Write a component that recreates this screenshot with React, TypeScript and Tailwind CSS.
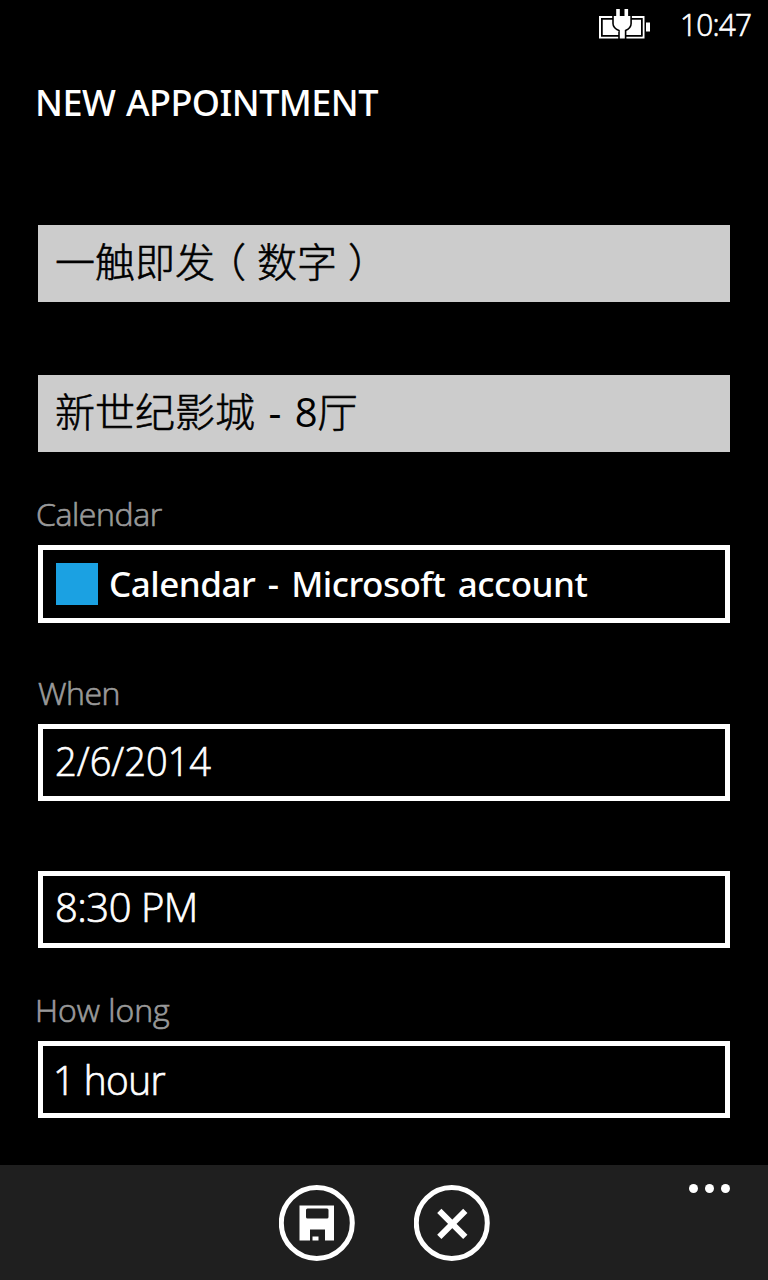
import type { ReactNode } from 'react';

const light = "font-['Open_Sans','Noto_Sans_CJK_SC',sans-serif] font-light [-webkit-text-stroke:0.7px_currentColor]";
const chinese = "font-['Open_Sans','Noto_Sans_CJK_SC',sans-serif] font-light [-webkit-text-stroke:0.6px_currentColor]";
const medium = "font-['Noto_Sans',sans-serif] font-medium";

function BatteryIcon() {
  return (
    <svg width="52" height="31" viewBox="0 0 52 31" fill="none">
      <rect x="1" y="8" width="43.5" height="20.500" stroke="#fff" strokeWidth="2" />
      <rect x="3.500" y="10.500" width="38.500" height="15.500" fill="#fff" />
      <rect x="2.750" y="9.750" width="40" height="17" stroke="#000" strokeWidth="1.500" />
      <rect x="47" y="13.500" width="4" height="9" fill="#fff" />
      <path
        d="M17.200 0h3.600v7h4.700V0h3.600v7h2.200v7.500c0 3.500-3 5.500-5.500 6.500v8.500h-5V21c-2.500-1-6-3-6-6.500V7h2.400z"
        fill="#fff" stroke="#000" strokeWidth="3.200" paintOrder="stroke"
      />
    </svg>
  );
}

function StatusBar() {
  return (
    <header className="flex h-[50px] items-start justify-end pr-[15px] text-white">
      <div className="mr-[29px] pt-[9px]"><BatteryIcon /></div>
      <time className={`${light} w-[73px] origin-left scale-x-[0.93] text-[32px] leading-[47px] tracking-[-0.85px]`}>10:47</time>
    </header>
  );
}

function Label({ children }: { children: ReactNode }) {
  return <p className={`${light} h-[40px] text-[32px] leading-[40px] text-[#999]`}>{children}</p>;
}

function Paren({ children }: { children: string }) {
  return <span className="inline-block w-[42px] text-center [font-feature-settings:'halt']">{children}</span>;
}

function SaveIcon() {
  return (
    <svg className="block" width="76" height="76" viewBox="0 0 76 76">
      <circle cx="37.800" cy="38" r="35.500" fill="none" stroke="#fff" strokeWidth="5" />
      <path fillRule="evenodd" d="M20.500 20.500H55V55.500H46V44.500H31V55.500H20.500zM28.500 23.500a1.500 1.500 0 0 0-1.500 1.500V32a1.500 1.500 0 0 0 1.500 1.500H48a1.500 1.500 0 0 0 1.500-1.500V25a1.500 1.500 0 0 0-1.500-1.500zM33.500 51.500h6v4h-6z" fill="#fff" />
    </svg>
  );
}

function CancelIcon() {
  return (
    <svg className="block" width="76" height="76" viewBox="0 0 76 76">
      <circle cx="37.800" cy="38" r="35.500" fill="none" stroke="#fff" strokeWidth="5" />
      <path d="M25.300 25.800l26 26M51.300 25.800l-26 26" stroke="#fff" strokeWidth="6" />
    </svg>
  );
}

export default function App() {
  return (
    <div className="flex h-[1280px] w-[768px] flex-col overflow-hidden bg-black text-white">
      <StatusBar />
      <main className="flex flex-1 flex-col px-[38px]">
        <h1 className={`${medium} mt-[29px] -ml-[3px] h-[48px] text-[36px] leading-[48px] tracking-[-0.55px] [word-spacing:2px]`}>NEW APPOINTMENT</h1>

        <div className={`${chinese} mt-[98px] h-[77px] bg-[#ccc] pl-[17px] text-[40px] leading-[74px] whitespace-nowrap text-black`}>
          一触即发<Paren>（</Paren>数字<Paren>）</Paren>
        </div>
        <div className={`${chinese} mt-[73px] h-[77px] bg-[#ccc] pl-[17px] text-[40px] leading-[74px] whitespace-nowrap text-black [word-spacing:3px]`}>
          新世纪影城 <span className="font-normal [-webkit-text-stroke:0px]">- 8</span>厅
        </div>

        <div className="mt-[42px] -ml-[2px]"><Label><span className="tracking-[-0.4px]">Calendar</span></Label></div>
        <div className="mt-[11px] flex h-[78px] items-center border-[5px] border-white pl-[13px]">
          <span className="h-[42px] w-[42px] bg-[#1ba1e2]" />
          <span className={`${medium} ml-[11px] text-[35px] leading-[50px] tracking-[-0.5px] [word-spacing:4px]`}>Calendar - Microsoft account</span>
        </div>

        <div className="mt-[50px]"><Label><span className="tracking-[-0.5px]">When</span></Label></div>
        <div className="mt-[11px] h-[77px] border-[5px] border-white pl-[12px]">
          <p className={`${light} origin-left scale-x-[0.95] text-[40px] leading-[63px]`}>2/6/2014</p>
        </div>
        <div className="mt-[70px] h-[77px] border-[5px] border-white pl-[12px]">
          <p className={`${light} text-[40px] leading-[62px] tracking-[-0.5px]`}>8:30 PM</p>
        </div>

        <div className="mt-[42px] -ml-[3px]"><Label>How long</Label></div>
        <div className="mt-[11px] h-[77px] border-[5px] border-white pl-[10px]">
          <p className={`${light} origin-left scale-x-[0.97] text-[40px] leading-[67px] tracking-[-0.7px]`}>1 hour</p>
        </div>
      </main>

      <footer className="grid h-[115px] grid-cols-[1fr_auto_1fr] bg-[#1f1f1f]">
        <div />
        <div className="flex items-start gap-[59px] pt-5">
          <button aria-label="save"><SaveIcon /></button>
          <button aria-label="cancel"><CancelIcon /></button>
        </div>
        <div className="flex justify-end gap-[7px] pt-[19px] pr-[38px]">
          <i className="h-[9px] w-[9px] rounded-full bg-white" />
          <i className="h-[9px] w-[9px] rounded-full bg-white" />
          <i className="h-[9px] w-[9px] rounded-full bg-white" />
        </div>
      </footer>
    </div>
  );
}
